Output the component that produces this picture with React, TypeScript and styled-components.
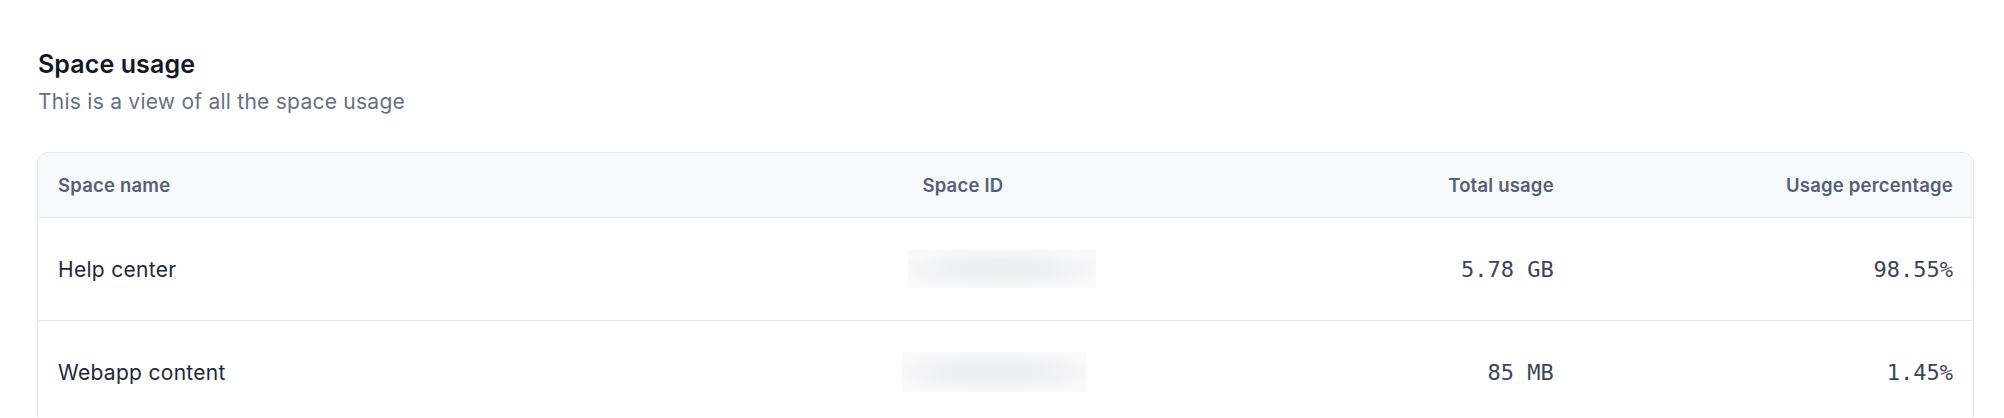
import React from "react";
import styled, { createGlobalStyle } from "styled-components";

const Global = createGlobalStyle`
  html, body { margin: 0; padding: 0; background: #ffffff; }
  body { font-family: Inter, "Noto Sans", sans-serif; -webkit-font-smoothing: antialiased; }
`;

const Page = styled.main`
  padding: 48px 30px 0 37px;
`;

const Header = styled.header`
  display: flex;
  flex-direction: column;
  gap: 8px;
  padding-left: 1px;
  margin-bottom: 36px;
`;

const Title = styled.h2`
  margin: 0;
  font-size: 25px;
  line-height: 32px;
  font-weight: 600;
  color: #111827;
  letter-spacing: 0.1px;
`;

const Subtitle = styled.p`
  margin: 0;
  font-size: 21px;
  line-height: 28px;
  font-weight: 400;
  color: #667085;
  letter-spacing: 0.25px;
`;

const Table = styled.div`
  border: 1px solid #e5e7eb;
  border-radius: 11px;
  overflow: hidden;
`;

const Row = styled.div<{ $head?: boolean }>`
  display: grid;
  grid-template-columns: 864fr 335fr 336fr 399fr;
  align-items: center;
  height: ${(p) => (p.$head ? 64 : 102)}px;
  background: ${(p) => (p.$head ? "#f8f9fb" : "#ffffff")};
  border-bottom: 1px solid #e5e7eb;
`;

const HeadCell = styled.div<{ $align?: "left" | "right" }>`
  padding: 0 20px;
  font-size: 18.5px;
  font-weight: 600;
  letter-spacing: 0.2px;
  color: #566074;
  text-align: ${(p) => p.$align ?? "left"};
`;

const NameCell = styled.div`
  padding: 0 20px;
  font-size: 21px;
  letter-spacing: 0.3px;
  color: #1e293b;
`;

const IdCell = styled.div`
  padding: 0 20px;
  display: flex;
`;

const Redacted = styled.div<{ $w: number; $h: number; $shift: number }>`
  width: ${(p) => p.$w}px;
  height: ${(p) => p.$h}px;
  margin-left: ${(p) => p.$shift}px;
  border-radius: 3px;
  background: radial-gradient(ellipse 60% 55% at 50% 50%, #eceef1 0%, #eff0f2 45%, #f7f7f8 85%, #f9f9fa 100%);
`;

const NumCell = styled.div`
  padding: 0 20px;
  text-align: right;
  font-family: "DejaVu Sans Mono", "Liberation Mono", monospace;
  font-size: 22px;
  color: #3b455a;
`;

const rows = [
  { name: "Help center", usage: "5.78 GB", pct: "98.55%", w: 188, h: 38, shift: -14 },
  { name: "Webapp content", usage: "85 MB", pct: "1.45%", w: 184, h: 40, shift: -20 },
];

export default function App() {
  return (
    <>
      <Global />
      <Page>
        <Header>
          <Title>Space usage</Title>
          <Subtitle>This is a view of all the space usage</Subtitle>
        </Header>
        <Table>
          <Row $head>
            <HeadCell>Space name</HeadCell>
            <HeadCell>Space ID</HeadCell>
            <HeadCell $align="right">Total usage</HeadCell>
            <HeadCell $align="right">Usage percentage</HeadCell>
          </Row>
          {rows.map((r) => (
            <Row key={r.name}>
              <NameCell>{r.name}</NameCell>
              <IdCell>
                <Redacted $w={r.w} $h={r.h} $shift={r.shift} />
              </IdCell>
              <NumCell>{r.usage}</NumCell>
              <NumCell>{r.pct}</NumCell>
            </Row>
          ))}
        </Table>
      </Page>
    </>
  );
}
